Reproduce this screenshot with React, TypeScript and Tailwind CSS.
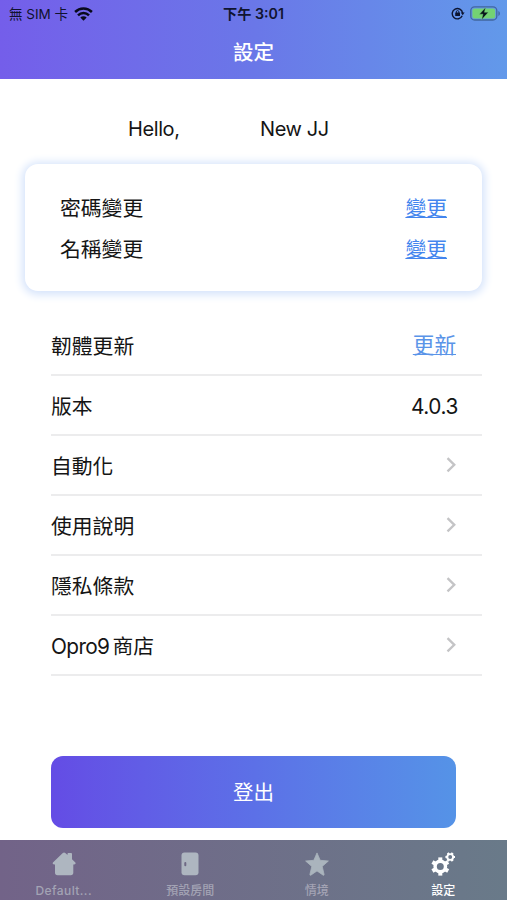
import React from "react";

const FONT = "font-['Inter','Noto_Sans_CJK_TC',sans-serif]";

function Wifi() {
  return (
    <svg width="19" height="15" viewBox="0 0 19 15" fill="none" stroke="#080a1c" strokeWidth="2.5">
      <path d="M1.1 5a12 12 0 0 1 16.800 0" />
      <path d="M4 8.300a7.900 7.900 0 0 1 11 0" />
      <path d="M9.500 13.700 6.300 10.500a4.600 4.600 0 0 1 6.400 0z" fill="#080a1c" stroke="none" />
    </svg>
  );
}

function RotationLock() {
  return (
    <svg width="14" height="13" viewBox="0 0 14 13" fill="none" stroke="#0c1430">
      <path d="M11.200 8.800A5.200 5.200 0 1 1 11.600 6" strokeWidth="1.4" />
      <path d="M9.800 5.400h3.800l-1.900 2.800z" fill="#0c1430" stroke="none" />
      <rect x="4.200" y="5.600" width="4.800" height="3.500" rx=".4" fill="#0c1430" stroke="none" />
      <path d="M5.300 6V4.900a1.300 1.300 0 0 1 2.600 0V6" strokeWidth=".9" />
    </svg>
  );
}

function Battery() {
  return (
    <svg width="31" height="15" viewBox="0 0 31 15">
      <rect x=".8" y=".8" width="26" height="13.200" rx="3.800" fill="none" stroke="#42679f" strokeWidth="1.300" />
      <rect x="2.400" y="2.400" width="22.800" height="10" rx="2.200" fill="#74d273" />
      <path d="M28.400 5v5c1-.4 1.500-1.400 1.500-2.500S29.400 5.400 28.400 5z" fill="#42679f" />
      <path d="M15.600 1.500 9.400 8.200h3.600l-1.400 5.500 6.700-7.400h-3.900z" fill="#07131a" stroke="#74d273" strokeWidth=".4" />
    </svg>
  );
}

function Chevron() {
  return (
    <svg width="11" height="16" viewBox="0 0 11 16" fill="none" stroke="#c4c4c6" strokeWidth="2.300">
      <path d="M1.500 1.200 8.300 7.800l-6.800 6.600" />
    </svg>
  );
}

function House() {
  return (
    <svg width="24" height="24" viewBox="0 0 24 24" fill="#aeb6c0">
      <path d="M10.800.9c.8-.7 1.700-.7 2.500 0l2.200 2V2c0-.7.400-1.100 1.100-1.100h2.300c.700 0 1.100.400 1.100 1.100v5.200l3.100 3c1 1 .5 2.300-.9 2.300h-.9v8.300c0 1.600-.9 2.500-2.500 2.500H5.500C3.900 23.300 3 22.400 3 20.800v-8.300h-.9c-1.400 0-1.900-1.300-.9-2.300z" />
    </svg>
  );
}

function Door() {
  return (
    <svg width="18" height="24" viewBox="0 0 18 24">
      <rect x=".5" y=".5" width="17" height="22.700" rx="3" fill="#aeb6c0" />
      <rect x="3.300" y="10" width="2" height="4.200" rx="1" fill="#6e6984" />
    </svg>
  );
}

function Star() {
  return (
    <svg width="24" height="24" viewBox="0 0 24 24" fill="#aab4bd" stroke="#aab4bd" strokeWidth=".8" strokeLinejoin="round">
      <path d="m12 .9 3.200 7.400 8.200.7-6.200 5.400 1.900 8.100c.1.700-.4 1-.9.700L12 18.900l-6.200 4.300c-.5.300-1 0-.9-.7l1.900-8.100L.6 9l8.200-.7z" />
    </svg>
  );
}

const TEETH = [0, 60, 120, 180, 240, 300];

function Gears() {
  return (
    <svg width="25" height="24" viewBox="0 0 25 24" fill="none" stroke="#fff">
      <circle cx="9.300" cy="14.500" r="5.200" strokeWidth="3.400" />
      {TEETH.map((a) => (
        <path key={a} d="M9.300 5.400v3" strokeWidth="4" transform={`rotate(${a} 9.300 14.500)`} />
      ))}
      <circle cx="19.200" cy="5" r="2.900" strokeWidth="1.900" />
      {TEETH.map((a) => (
        <path key={a} d="M19.200.2v1.800" strokeWidth="2.200" transform={`rotate(${a + 30} 19.200 5)`} />
      ))}
    </svg>
  );
}

function Row({ label, children }: { label: React.ReactNode; children: React.ReactNode }) {
  return (
    <div className="flex h-[60px] items-center justify-between border-b-2 border-[#ececed] pr-[25px]">
      <span className="pt-1">{label}</span>
      {children}
    </div>
  );
}

function Tab({ label, icon, active, latin }: { label: string; icon: React.ReactNode; active?: boolean; latin?: boolean }) {
  return (
    <div className="flex w-[126.500px] flex-col items-center pl-px pt-3">
      {icon}
      <span
        className={`mt-[7px] text-[12px] leading-4 ${latin ? "tracking-[0.035em]" : ""} ${active ? "font-medium text-white" : "font-medium text-[#a3a3b4]"}`}
      >
        {label}
      </span>
    </div>
  );
}

const LINK = "underline decoration-1 underline-offset-1 [text-decoration-skip-ink:none]";

export default function App() {
  return (
    <div className={`flex h-[900px] w-[507px] flex-col overflow-hidden bg-white text-[20.800px] leading-[30px] text-[#151515] ${FONT}`}>
      <header className="h-[79px] bg-linear-to-r from-[#745eea] via-[#6a77e8] to-[#6299ea]">
        <div className="grid h-7 grid-cols-3 items-center pl-[9px] pr-[5px] text-[13.500px] leading-5 text-[#10122e]">
          <div className="flex items-center gap-[6px]">
            <span className="whitespace-nowrap">無 SIM 卡</span>
            <Wifi />
          </div>
          <span className="-ml-1 text-center text-[14.200px] font-semibold text-[#101430]">下午 3:01</span>
          <div className="flex items-center justify-end gap-[5px] pb-px pr-px">
            <RotationLock />
            <Battery />
          </div>
        </div>
        <h1 className="pt-[10px] text-center text-[20.500px] font-medium leading-[30px] text-white">設定</h1>
      </header>

      <div className="flex h-[85px] items-center pl-[128px] pt-[14px] text-[20px] tracking-[-0.02em]">
        <span className="w-[132px]">Hello,</span>
        <span>New JJ</span>
      </div>

      <section className="mx-[25px] h-[127px] rounded-[13px] bg-white px-[35px] pt-[30px] shadow-[0_1px_9px_3px_#d6e4fb]">
        <div className="flex h-[41px] justify-between">
          <span>密碼變更</span>
          <a className={`text-[#4385ee] ${LINK}`}>變更</a>
        </div>
        <div className="flex h-[41px] justify-between">
          <span>名稱變更</span>
          <a className={`text-[#4385ee] ${LINK}`}>變更</a>
        </div>
      </section>

      <main className="ml-[51px] mr-[25px] mt-[25px]">
        <Row label="韌體更新">
          <a className={`mr-px text-[21.600px] text-[#5a94e8] ${LINK}`}>更新</a>
        </Row>
        <Row label="版本">
          <span className="-mr-px pt-1 tracking-[-0.02em]">4.0.3</span>
        </Row>
        <Row label="自動化"><Chevron /></Row>
        <Row label="使用說明"><Chevron /></Row>
        <Row label="隱私條款"><Chevron /></Row>
        <Row label={<><span className="mr-[3px] tracking-[-0.03em]">Opro9</span>商店</>}><Chevron /></Row>
      </main>

      <button className="ml-[51px] mt-[80px] h-[72px] w-[405px] shrink-0 rounded-[12px] bg-linear-to-r from-[#644ce5] via-[#5c70e7] to-[#5593e7] pt-0.5 text-[20.500px] text-white">
        登出
      </button>

      <nav className="mt-auto flex h-[60px] bg-linear-to-r from-[#726388] to-[#697a89]">
        <Tab label="Default..." icon={<House />} latin />
        <Tab label="預設房間" icon={<Door />} />
        <Tab label="情境" icon={<Star />} />
        <Tab label="設定" icon={<Gears />} active />
      </nav>
    </div>
  );
}
